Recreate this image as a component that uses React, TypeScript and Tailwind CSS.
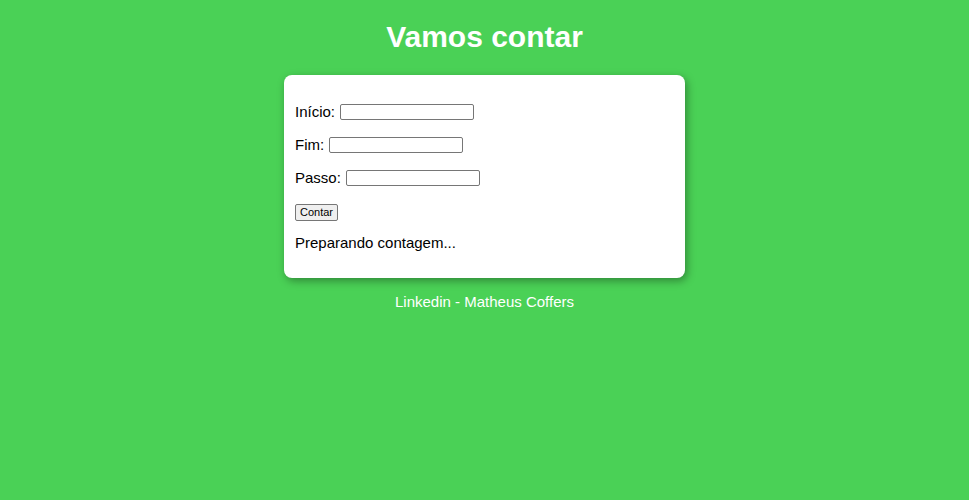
import React from "react";

const font = { fontFamily: '"Liberation Sans", Arial, sans-serif' };

function Field({ label }: { label: string }) {
  return (
    <div className="flex items-end h-[17px] text-[15px] leading-[17px] text-black">
      <span>{label}:</span>
      <input
        type="text"
        className="ml-[5px] w-[134px] h-[16px] bg-white border border-[#767676] rounded-[2px] outline-none"
      />
    </div>
  );
}

export default function App() {
  return (
    <div className="min-h-[500px] bg-[#4ad156] flex flex-col items-center" style={font}>
      <h1 className="mt-[20px] text-[30px] leading-[34px] font-bold text-white">Vamos contar</h1>
      <div className="mt-[21px] w-[401px] bg-white rounded-[8px] shadow-[2px_3px_8px_rgba(0,0,0,0.35)] pt-[28px] pb-[27px] px-[11px] flex flex-col">
        <div className="flex flex-col gap-[16px]">
          <Field label="Início" />
          <Field label="Fim" />
          <Field label="Passo" />
        </div>
        <button
          type="button"
          className="mt-[18px] self-start h-[17px] px-[4px] text-[11px] leading-[13px] text-black bg-[#efefef] border border-[#767676] rounded-[2px]"
        >
          Contar
        </button>
        <p className="mt-[13px] text-[15px] leading-[17px] text-black">Preparando contagem...</p>
      </div>
      <p className="mt-[15px] text-[15px] leading-[17px] text-white">Linkedin - Matheus Coffers</p>
    </div>
  );
}
